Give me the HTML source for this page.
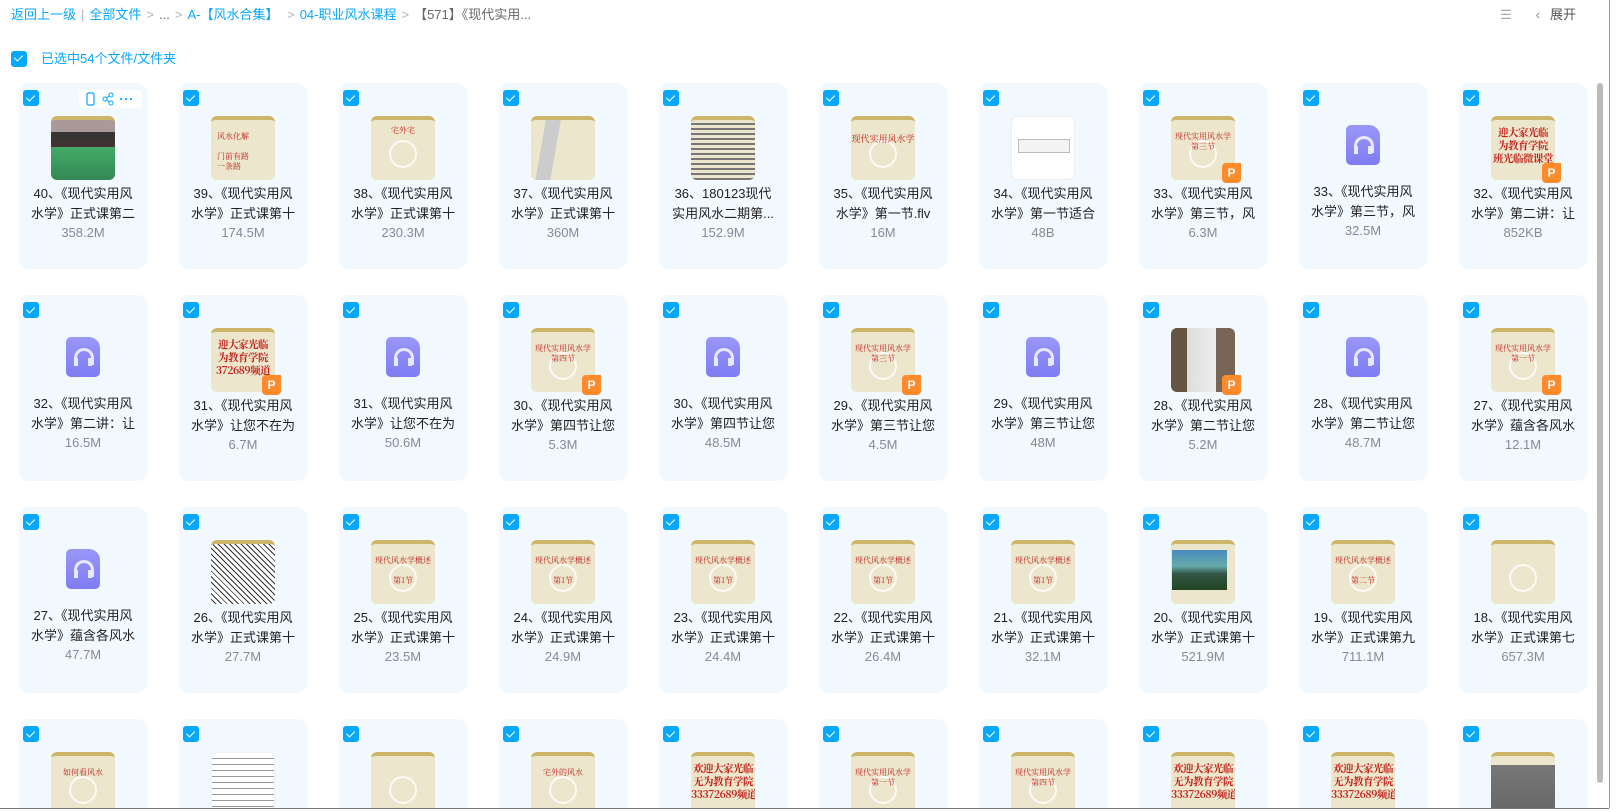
<!DOCTYPE html>
<html><head><meta charset="utf-8">
<style>
*{margin:0;padding:0;box-sizing:border-box}
html{width:1618px;height:812px;overflow:hidden}
body{width:1618px;height:812px;overflow:hidden;background:#fff;font-family:"Liberation Sans","Noto Sans CJK SC",sans-serif;position:relative}
.bc{position:absolute;top:5px;left:11px;font-size:13px;color:#06a7ff;white-space:nowrap;line-height:20px}
.bc .g{color:#b0b5bd;margin:0 5px}
.bc .l{color:#666}
.tr{position:absolute;top:5px;left:1500px;font-size:13px;color:#555;line-height:20px}
.sel{position:absolute;top:49px;left:11px;font-size:13px;color:#06a7ff;line-height:18px}
.cb{display:inline-block;width:16px;height:16px;border-radius:3px;background:#06a7ff;position:relative;vertical-align:middle}
.cb:after{content:"";position:absolute;left:5px;top:2.5px;width:4px;height:7px;border:solid #fff;border-width:0 1.6px 1.6px 0;transform:rotate(45deg)}
.grid{position:absolute;left:19px;top:83px;width:1590px;height:725px;overflow:hidden}
.c{position:absolute;width:128px;height:186px;background:#f1f9fe;border-radius:10px}
.c .cb{position:absolute;left:4px;top:7px}
.t{position:absolute;left:32px;top:33px;width:64px;height:64px;border-radius:6px;overflow:hidden;background:#ebe6cc;border-top:4px solid #cdb56a}
.t.w{background:#fff;border-top:none;border:1px solid #eee}
.t i{position:absolute;left:0;right:0;text-align:center;color:#c0201a;font-style:normal;font-size:8px;line-height:10px;top:12px;font-family:"Noto Serif CJK SC",serif}
.t.r i{font-size:10.5px;line-height:13px;font-weight:bold;top:6px;white-space:nowrap;letter-spacing:-0.5px}
.t .ring{position:absolute;left:18px;top:20px;width:28px;height:28px;border:2px solid rgba(255,255,255,.8);border-radius:50%}
.P{position:absolute;left:83px;top:80px;width:19px;height:20px;border-radius:4px 0 4px 4px;background:#ff8a2a;color:#fff;font-size:12px;font-weight:bold;text-align:center;line-height:20px}
.au{position:absolute;left:47px;top:42px;width:34px;height:40px;border-radius:5px 11px 5px 5px;background:linear-gradient(#9a97fa,#7f7cf3)}
.au:after{content:"";position:absolute;left:8px;top:11px;width:14px;height:14px;border:3px solid #e8e8ff;border-bottom:none;border-radius:10px 10px 0 0}
.au:before{content:"";position:absolute;left:8px;top:21px;width:18px;height:8px;border-left:4px solid #e8e8ff;border-right:4px solid #e8e8ff;box-sizing:border-box;z-index:1}
.n{position:absolute;left:10px;right:10px;top:101px;text-align:center;font-size:13px;line-height:20px;color:#222}
.s{position:absolute;left:0;right:0;top:142px;text-align:center;font-size:13px;color:#848b96}
.c.a .n{top:99px}.c.a .s{top:140px}
.act{position:absolute;left:60px;top:7px;width:63px;height:18px;background:#fff;border-radius:4px;color:#06a7ff;font-size:12px}
.sb{position:absolute;left:1597px;top:83px;width:6px;height:700px;background:#bbb;border-radius:3px}
.vl{position:absolute;left:1609px;top:0;width:1px;height:808px;background:#999}
.hl{position:absolute;left:0;top:808px;width:1609px;height:1px;background:#777}
</style></head><body>
<div class="bc">返回上一级<span class="g">|</span>全部文件<span class="g">&gt;</span><span class="l">...</span><span class="g">&gt;</span>A-【风水合集】<span class="g">&nbsp;&gt;</span>04-职业风水课程<span class="g">&gt;</span><span class="l">【571】《现代实用...</span></div>
<div class="tr"><span style="color:#aaa;margin-right:24px">☰</span><span style="color:#888;margin-right:10px">‹</span>展开</div>
<div class="sel"><span class="cb"></span><span style="margin-left:14px;vertical-align:middle">已选中54个文件/文件夹</span></div>
<div class="grid">
<div class="c" style="left:0;top:0"><span class="cb"></span><div class="act"><svg width="63" height="18"><rect x="8" y="3" width="7" height="12" rx="1.5" fill="none" stroke="#06a7ff" stroke-width="1.2"/><circle cx="26" cy="9" r="2" fill="none" stroke="#06a7ff"/><circle cx="32" cy="5" r="2" fill="none" stroke="#06a7ff"/><circle cx="32" cy="13" r="2" fill="none" stroke="#06a7ff"/><path d="M28 8l2-2M28 10l2 2" stroke="#06a7ff"/><circle cx="42" cy="9" r="1.1" fill="#06a7ff"/><circle cx="47" cy="9" r="1.1" fill="#06a7ff"/><circle cx="52" cy="9" r="1.1" fill="#06a7ff"/></svg></div><div class="t" style="background:linear-gradient(#a99 0,#a99 20%,#333 20%,#433 45%,#4a6 45%,#385 100%)"></div><div class="n">40、《现代实用风水学》正式课第二</div><div class="s">358.2M</div></div>
<div class="c" style="left:160px;top:0"><span class="cb"></span><div class="t"><i style="text-align:left;padding-left:6px">风水化解<br><br>门前有路<br>一条路<br><br>大门冲路</i></div><div class="n">39、《现代实用风水学》正式课第十</div><div class="s">174.5M</div></div>
<div class="c" style="left:320px;top:0"><span class="cb"></span><div class="t"><div class="ring"></div><i style="top:6px">宅外宅</i></div><div class="n">38、《现代实用风水学》正式课第十</div><div class="s">230.3M</div></div>
<div class="c" style="left:480px;top:0"><span class="cb"></span><div class="t" style="background:linear-gradient(100deg,#ebe6cc 20%,#ccc 20%,#ccc 40%,#ebe6cc 40%)"></div><div class="n">37、《现代实用风水学》正式课第十</div><div class="s">360M</div></div>
<div class="c" style="left:640px;top:0"><span class="cb"></span><div class="t" style="background:repeating-linear-gradient(#ebe6cc 0,#ebe6cc 3px,#777 3px,#777 5px)"></div><div class="n">36、180123现代实用风水二期第...</div><div class="s">152.9M</div></div>
<div class="c" style="left:800px;top:0"><span class="cb"></span><div class="t"><div class="ring"></div><i style="font-size:9px;top:14px">现代实用风水学</i></div><div class="n">35、《现代实用风水学》第一节.flv</div><div class="s">16M</div></div>
<div class="c" style="left:960px;top:0"><span class="cb"></span><div class="t w"><div style="position:absolute;left:6px;top:22px;width:52px;height:14px;border:1px solid #bbb;background:#f4f4f4"></div></div><div class="n">34、《现代实用风水学》第一节适合</div><div class="s">48B</div></div>
<div class="c" style="left:1120px;top:0"><span class="cb"></span><div class="t"><div class="ring"></div><i>现代实用风水学<br>第三节</i></div><div class="P">P</div><div class="n">33、《现代实用风水学》第三节，风</div><div class="s">6.3M</div></div>
<div class="c a" style="left:1280px;top:0"><span class="cb"></span><div class="au"></div><div class="n">33、《现代实用风水学》第三节，风</div><div class="s">32.5M</div></div>
<div class="c" style="left:1440px;top:0"><span class="cb"></span><div class="t r"><i>迎大家光临<br>为教育学院<br>班光临微课堂</i></div><div class="P">P</div><div class="n">32、《现代实用风水学》第二讲：让</div><div class="s">852KB</div></div>
<div class="c a" style="left:0;top:212px"><span class="cb"></span><div class="au"></div><div class="n">32、《现代实用风水学》第二讲：让</div><div class="s">16.5M</div></div>
<div class="c" style="left:160px;top:212px"><span class="cb"></span><div class="t r"><i>迎大家光临<br>为教育学院<br>372689频道</i></div><div class="P">P</div><div class="n">31、《现代实用风水学》让您不在为</div><div class="s">6.7M</div></div>
<div class="c a" style="left:320px;top:212px"><span class="cb"></span><div class="au"></div><div class="n">31、《现代实用风水学》让您不在为</div><div class="s">50.6M</div></div>
<div class="c" style="left:480px;top:212px"><span class="cb"></span><div class="t"><div class="ring"></div><i>现代实用风水学<br>第四节</i></div><div class="P">P</div><div class="n">30、《现代实用风水学》第四节让您</div><div class="s">5.3M</div></div>
<div class="c a" style="left:640px;top:212px"><span class="cb"></span><div class="au"></div><div class="n">30、《现代实用风水学》第四节让您</div><div class="s">48.5M</div></div>
<div class="c" style="left:800px;top:212px"><span class="cb"></span><div class="t"><div class="ring"></div><i>现代实用风水学<br>第三节</i></div><div class="P">P</div><div class="n">29、《现代实用风水学》第三节让您</div><div class="s">4.5M</div></div>
<div class="c a" style="left:960px;top:212px"><span class="cb"></span><div class="au"></div><div class="n">29、《现代实用风水学》第三节让您</div><div class="s">48M</div></div>
<div class="c" style="left:1120px;top:212px"><span class="cb"></span><div class="t" style="border:none;background:linear-gradient(90deg,#654 0,#654 25%,#ddd 25%,#eee 70%,#765 70%)"></div><div class="P">P</div><div class="n">28、《现代实用风水学》第二节让您</div><div class="s">5.2M</div></div>
<div class="c a" style="left:1280px;top:212px"><span class="cb"></span><div class="au"></div><div class="n">28、《现代实用风水学》第二节让您</div><div class="s">48.7M</div></div>
<div class="c" style="left:1440px;top:212px"><span class="cb"></span><div class="t"><div class="ring"></div><i>现代实用风水学<br>第一节</i></div><div class="P">P</div><div class="n">27、《现代实用风水学》蕴含各风水</div><div class="s">12.1M</div></div>
<div class="c a" style="left:0;top:424px"><span class="cb"></span><div class="au"></div><div class="n">27、《现代实用风水学》蕴含各风水</div><div class="s">47.7M</div></div>
<div class="c" style="left:160px;top:424px"><span class="cb"></span><div class="t" style="background:repeating-linear-gradient(45deg,#fff 0,#fff 3px,#333 3px,#333 4px)"></div><div class="n">26、《现代实用风水学》正式课第十</div><div class="s">27.7M</div></div>
<div class="c" style="left:320px;top:424px"><span class="cb"></span><div class="t"><div class="ring"></div><i>现代风水学概述<br><br>第1节</i></div><div class="n">25、《现代实用风水学》正式课第十</div><div class="s">23.5M</div></div>
<div class="c" style="left:480px;top:424px"><span class="cb"></span><div class="t"><div class="ring"></div><i>现代风水学概述<br><br>第1节</i></div><div class="n">24、《现代实用风水学》正式课第十</div><div class="s">24.9M</div></div>
<div class="c" style="left:640px;top:424px"><span class="cb"></span><div class="t"><div class="ring"></div><i>现代风水学概述<br><br>第1节</i></div><div class="n">23、《现代实用风水学》正式课第十</div><div class="s">24.4M</div></div>
<div class="c" style="left:800px;top:424px"><span class="cb"></span><div class="t"><div class="ring"></div><i>现代风水学概述<br><br>第1节</i></div><div class="n">22、《现代实用风水学》正式课第十</div><div class="s">26.4M</div></div>
<div class="c" style="left:960px;top:424px"><span class="cb"></span><div class="t"><div class="ring"></div><i>现代风水学概述<br><br>第1节</i></div><div class="n">21、《现代实用风水学》正式课第十</div><div class="s">32.1M</div></div>
<div class="c" style="left:1120px;top:424px"><span class="cb"></span><div class="t"><div style="position:absolute;left:1px;top:6px;width:55px;height:40px;background:linear-gradient(#4a8bc0 0,#6aa 40%,#354 60%,#242 100%)"></div></div><div class="n">20、《现代实用风水学》正式课第十</div><div class="s">521.9M</div></div>
<div class="c" style="left:1280px;top:424px"><span class="cb"></span><div class="t"><div class="ring"></div><i>现代风水学概述<br><br>第二节</i></div><div class="n">19、《现代实用风水学》正式课第九</div><div class="s">711.1M</div></div>
<div class="c" style="left:1440px;top:424px"><span class="cb"></span><div class="t"><div class="ring"></div></div><div class="n">18、《现代实用风水学》正式课第七</div><div class="s">657.3M</div></div>
<div class="c" style="left:0;top:636px"><span class="cb"></span><div class="t"><div class="ring"></div><i>如何看风水</i></div></div>
<div class="c" style="left:160px;top:636px"><span class="cb"></span><div class="t w" style="background:repeating-linear-gradient(#fff 0,#fff 5px,#999 5px,#999 6px)"></div></div>
<div class="c" style="left:320px;top:636px"><span class="cb"></span><div class="t"><div class="ring"></div></div></div>
<div class="c" style="left:480px;top:636px"><span class="cb"></span><div class="t"><div class="ring"></div><i>宅外的风水</i></div></div>
<div class="c" style="left:640px;top:636px"><span class="cb"></span><div class="t r"><i>欢迎大家光临<br>无为教育学院<br>33372689频道</i></div></div>
<div class="c" style="left:800px;top:636px"><span class="cb"></span><div class="t"><div class="ring"></div><i>现代实用风水学<br>第一节</i></div></div>
<div class="c" style="left:960px;top:636px"><span class="cb"></span><div class="t"><div class="ring"></div><i>现代实用风水学<br>第四节</i></div></div>
<div class="c" style="left:1120px;top:636px"><span class="cb"></span><div class="t r"><i>欢迎大家光临<br>无为教育学院<br>33372689频道</i></div></div>
<div class="c" style="left:1280px;top:636px"><span class="cb"></span><div class="t r"><i>欢迎大家光临<br>无为教育学院<br>33372689频道</i></div></div>
<div class="c" style="left:1440px;top:636px"><span class="cb"></span><div class="t" style="background:linear-gradient(#ebe6cc 0,#ebe6cc 15%,#777 15%,#666 100%)"></div></div>
</div>
<div class="sb"></div>
<div class="vl"></div>
<div class="hl"></div>
</body></html>
